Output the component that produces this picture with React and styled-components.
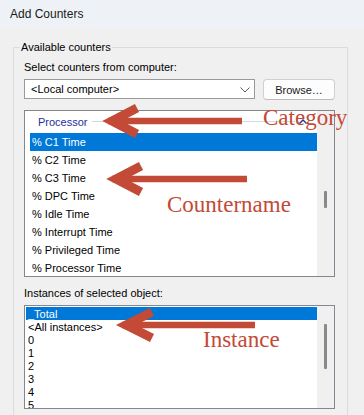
import React from 'react'
import styled, { createGlobalStyle } from 'styled-components'

const counters = [
  '% C1 Time',
  '% C2 Time',
  '% C3 Time',
  '% DPC Time',
  '% Idle Time',
  '% Interrupt Time',
  '% Privileged Time',
  '% Processor Time',
]

const instances = ['_Total', '<All instances>', '0', '1', '2', '3', '4', '5']

const callouts = [
  { label: 'Category', left: 263, top: 106 },
  { label: 'Countername', left: 167, top: 193 },
  { label: 'Instance', left: 203, top: 328 },
]

const arrows = [
  { tip: 112, y: 121, end: 242, dx: 25, dy: 13 },
  { tip: 116, y: 179, end: 247, dx: 25, dy: 13 },
  { tip: 126, y: 325, end: 255, dx: 26, dy: 13 },
]

const GlobalStyle = createGlobalStyle`
  html, body {
    margin: 0;
    background: #f0f0f0;
  }
  body {
    font-family: "Liberation Sans", Arial, sans-serif;
    font-size: 11px;
    color: #000;
  }
`

const App = () => (
  <Window>
    <GlobalStyle />
    <TitleBar>Add Counters</TitleBar>
    <GroupBox>
      <Legend>Available counters</Legend>
      <GroupContent>
        <FieldLabel>Select counters from computer:</FieldLabel>
        <ComputerRow>
          <Combo>
            <span>&lt;Local computer&gt;</span>
            <svg width="10" height="6" viewBox="0 0 10 6">
              <polyline points="0.5,0.5 5,5 9.5,0.5" fill="none" stroke="#5a5a5a" strokeWidth="1" />
            </svg>
          </Combo>
          <Button>Browse…</Button>
        </ComputerRow>

        <ListBox $height={167} $gap={10}>
          <ListContent>
            <GroupHeader>
              <span>Processor</span>
              <HeaderRule />
              <svg width="8" height="5" viewBox="0 0 8 5">
                <polyline points="0.5,4.5 4,1 7.5,4.5" fill="none" stroke="#1f2f9a" strokeWidth="1.4" />
              </svg>
            </GroupHeader>
            {counters.map((name, i) => (
              <CounterRow key={name} $selected={i === 0}>{name}</CounterRow>
            ))}
          </ListContent>
          <ScrollTrack>
            <Thumb $offset={80} $length={17} />
          </ScrollTrack>
        </ListBox>

        <FieldLabel $gap={9}>Instances of selected object:</FieldLabel>
        <ListBox $height={104} $gap={5}>
          <ListContent $pad={1}>
            {instances.map((name, i) => (
              <InstanceRow key={name} $selected={i === 0}>{name}</InstanceRow>
            ))}
          </ListContent>
          <ScrollTrack>
            <Thumb $offset={18} $length={45} />
          </ScrollTrack>
        </ListBox>
      </GroupContent>
    </GroupBox>

    <Annotations>
      <svg width="364" height="415" viewBox="0 0 364 415">
        {arrows.map(a => (
          <g key={a.y} fill="none" stroke="#c24a37">
            <path d={`M${ a.tip - 4 } ${ a.y }H${ a.end }`} strokeWidth="6.5" />
            <path
              d={`M${ a.tip + a.dx } ${ a.y - a.dy }L${ a.tip } ${ a.y }L${ a.tip + a.dx } ${ a.y + a.dy }`}
              strokeWidth="9"
              strokeLinejoin="miter"
            />
          </g>
        ))}
      </svg>
      {callouts.map(c => (
        <Callout key={c.label} style={{ left: c.left, top: c.top }}>{c.label}</Callout>
      ))}
    </Annotations>
  </Window>
)

const Window = styled.div`
  position: relative;
  width: 364px;
  height: 415px;
  overflow: hidden;
  background: #f0f0f0;
`

const TitleBar = styled.div`
  height: 28px;
  display: flex;
  align-items: center;
  padding-left: 10px;
  background: #eef2f6;
  font-size: 12px;
  color: #1a1a1a;
`

const GroupBox = styled.fieldset`
  margin: 13px 0 0 13px;
  padding: 0;
  width: 335px;
  height: 420px;
  box-sizing: border-box;
  border: 1px solid #dcdcdc;
  min-width: 0;
`

const Legend = styled.legend`
  margin-left: 6px;
  padding: 0 1px;
  line-height: 12px;
  color: #000;
`

const GroupContent = styled.div`
  display: flex;
  flex-direction: column;
  padding: 7px 0 0 10px;
`

const FieldLabel = styled.div`
  line-height: 14px;
  margin-top: ${ p => p.$gap || 0 }px;
`

const ComputerRow = styled.div`
  display: flex;
  align-items: flex-start;
  gap: 8px;
  margin-top: 5px;
`

const Combo = styled.div`
  width: 231px;
  height: 20px;
  box-sizing: border-box;
  display: flex;
  align-items: center;
  justify-content: space-between;
  padding: 0 4px 0 6px;
  background: #fff;
  border: 1px solid #9a9a9a;

  svg {
    margin-top: 1px;
  }
`

const Button = styled.div`
  width: 72px;
  height: 21px;
  box-sizing: border-box;
  display: flex;
  align-items: center;
  justify-content: center;
  background: #fdfdfd;
  border: 1px solid #d0d0d0;
  border-bottom-color: #bcbcbc;
  border-radius: 4px;
  color: #1a1a1a;
`

const ListBox = styled.div`
  display: flex;
  width: 311px;
  height: ${ p => p.$height }px;
  margin-top: ${ p => p.$gap }px;
  box-sizing: border-box;
  border: 1px solid #828790;
  overflow: hidden;
`

const ListContent = styled.div`
  flex: 1;
  display: flex;
  flex-direction: column;
  padding-top: ${ p => p.$pad || 0 }px;
  background: #fff;
`

const GroupHeader = styled.div`
  height: 21px;
  flex-shrink: 0;
  display: flex;
  align-items: center;
  gap: 4px;
  padding: 0 10px 1px 13px;
  color: #1f2f9a;

  svg {
    margin-bottom: 1px;
  }
`

const HeaderRule = styled.div`
  flex: 1;
  height: 1px;
  background: #d3d9e4;
`

const CounterRow = styled.div`
  height: 18px;
  flex-shrink: 0;
  display: flex;
  align-items: center;
  margin-left: 5px;
  padding-left: 2px;
  background: ${ p => (p.$selected ? '#0078d7' : 'transparent') };
  color: ${ p => (p.$selected ? '#fff' : '#000') };
`

const InstanceRow = styled.div`
  height: 13px;
  flex-shrink: 0;
  display: flex;
  align-items: center;
  margin-left: 1px;
  padding-left: 2px;
  background: ${ p => (p.$selected ? '#0078d7' : 'transparent') };
  color: ${ p => (p.$selected ? '#fff' : '#000') };
`

const ScrollTrack = styled.div`
  width: 17px;
  flex-shrink: 0;
  display: flex;
  flex-direction: column;
  align-items: center;
  background: #f0f0f0;
`

const Thumb = styled.div`
  width: 3px;
  height: ${ p => p.$length }px;
  margin-top: ${ p => p.$offset }px;
  border-radius: 1px;
  background: #8a8a8a;
`

const Annotations = styled.div`
  position: absolute;
  inset: 0;
  pointer-events: none;

  svg {
    position: absolute;
    left: 0;
    top: 0;
  }
`

const Callout = styled.span`
  position: absolute;
  font-family: "Liberation Serif", "Times New Roman", serif;
  font-size: 23px;
  line-height: 1;
  color: #c24a37;
  white-space: nowrap;
`

export default App
